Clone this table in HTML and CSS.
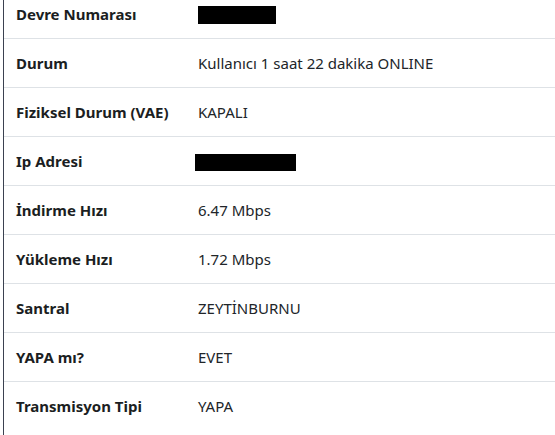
FILE: index.html
```html
<!DOCTYPE html>
<html lang="tr">
<head>
<meta charset="utf-8">
<link rel="stylesheet" href="styles.css">
</head>
<body>
<div class="panel">
  <table class="info">
    <colgroup><col class="col-key"><col class="col-val"></colgroup>
    <tbody>
      <tr><th>Devre Numarası</th><td><span class="mask mask-a"></span></td></tr>
      <tr><th>Durum</th><td>Kullanıcı 1 saat 22 dakika ONLINE</td></tr>
      <tr><th>Fiziksel Durum (VAE)</th><td>KAPALI</td></tr>
      <tr><th>Ip Adresi</th><td><span class="mask mask-b"></span></td></tr>
      <tr><th>İndirme Hızı</th><td>6.47 Mbps</td></tr>
      <tr><th>Yükleme Hızı</th><td>1.72 Mbps</td></tr>
      <tr><th>Santral</th><td>ZEYTİNBURNU</td></tr>
      <tr><th>YAPA mı?</th><td>EVET</td></tr>
      <tr><th>Transmisyon Tipi</th><td>YAPA</td></tr>
    </tbody>
  </table>
</div>
</body>
</html>
```
FILE: styles.css
```css
html, body {
  margin: 0;
  padding: 0;
  background: #fff;
}
body {
  font-family: "Noto Sans", "Open Sans", sans-serif;
  font-size: 15px;
  color: #212529;
  overflow: hidden;
  height: 435px;
}
.panel {
  margin-left: 3px;
  border-left: 1px solid #3b4150;
  height: 435px;
  overflow: hidden;
}
.info {
  border-collapse: collapse;
  table-layout: fixed;
  width: 100%;
  margin-top: -11px;
}
.col-key {
  width: 182px;
}
.info th, .info td {
  height: 48px;
  padding: 0 12px;
  border-top: 1px solid #dee2e6;
  text-align: left;
  vertical-align: middle;
  line-height: 20px;
  white-space: nowrap;
}
.info th {
  font-weight: 700;
  color: #1b1e22;
}
.info td {
  font-weight: 400;
}
.mask {
  display: inline-block;
  background: #000;
  vertical-align: middle;
}
.mask-a {
  width: 78px;
  height: 18px;
}
.mask-b {
  width: 101px;
  height: 17px;
  margin-left: -3px;
}
```
